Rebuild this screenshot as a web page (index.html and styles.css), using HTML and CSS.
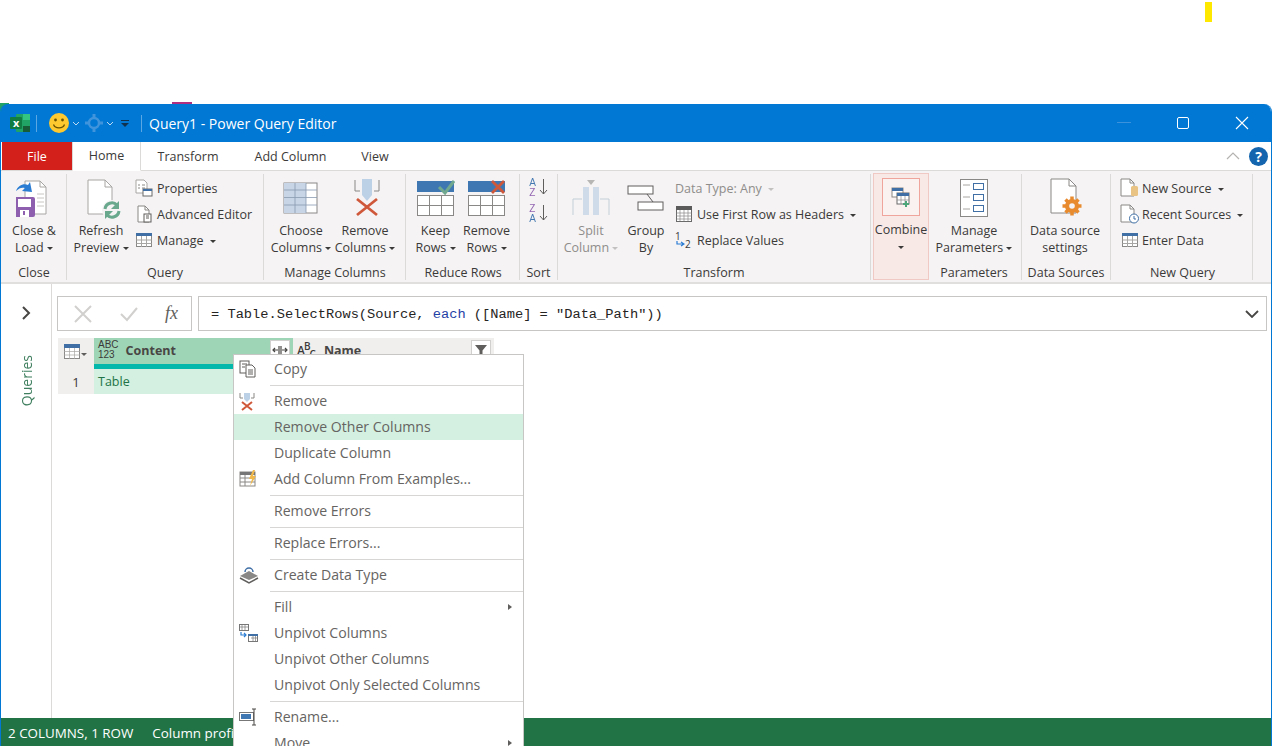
FILE: index.html
```html
<!DOCTYPE html>
<html lang="en">
<head>
    <meta charset="UTF-8">
    <title>Query1 - Power Query Editor</title>
    <link rel="stylesheet" href="styles.css">
</head>
<body>
    <div class="yellow-mark"></div>
    <div class="behind-pink"></div>
    <div class="behind-green"></div>
    <div class="window">
        <div class="titlebar">
            <svg class="excel-logo" width="22" height="20" viewBox="0 0 22 20"><rect x="7" y="1" width="14" height="18" rx="1" fill="#21a366"/><rect x="14" y="1" width="7" height="6" fill="#33c481"/><rect x="14" y="13" width="7" height="6" fill="#185c37"/><rect x="1" y="4" width="12" height="12" rx="1" fill="#107c41"/><text x="4" y="14" class="logo-x">x</text></svg>
            <span class="title-sep"></span>
            <svg class="smiley" width="22" height="22" viewBox="0 0 22 22"><circle cx="11" cy="11" r="10" fill="#fdc92f"/><circle cx="7.5" cy="8" r="1.4" fill="#6b5200"/><circle cx="14.5" cy="8" r="1.4" fill="#6b5200"/><path d="M5.5 12.5c1.5 4.5 9.500 4.500 11 0" fill="none" stroke="#6b5200" stroke-width="1.200"/></svg>
            <svg class="qat-arrow" width="8" height="5" viewBox="0 0 8 5"><path d="M1 1l3 3 3-3" fill="none" stroke="#bcd9f2"/></svg>
            <svg class="qat-gear" width="20" height="20" viewBox="0 0 20 20"><g fill="#3f94dc"><circle cx="10" cy="10" r="5" fill="none" stroke="#3f94dc" stroke-width="2.500"/><rect x="8.500" y="1" width="3" height="4"/><rect x="8.500" y="15" width="3" height="4"/><rect x="1" y="8.500" width="4" height="3"/><rect x="15" y="8.500" width="4" height="3"/></g></svg>
            <svg class="qat-arrow" width="8" height="5" viewBox="0 0 8 5"><path d="M1 1l3 3 3-3" fill="none" stroke="#bcd9f2"/></svg>
            <svg class="qat-more" width="8" height="7" viewBox="0 0 8 7"><rect y="0" width="8" height="1" fill="#10324f"/><path d="M0 3h8L4 7z" fill="#10324f"/></svg>
            <span class="title-sep"></span>
            <span class="title-text">Query1 - Power Query Editor</span>
            <div class="win-controls">
                <svg width="14" height="2" viewBox="0 0 14 2"><rect width="14" height="1" fill="#3c93db"/></svg>
                <svg width="12" height="12" viewBox="0 0 12 12"><rect x="0.500" y="0.500" width="11" height="11" rx="1.500" fill="none" stroke="#fff"/></svg>
                <svg width="14" height="14" viewBox="0 0 14 14"><path d="M1 1l12 12M13 1L1 13" stroke="#fff" stroke-width="1.100"/></svg>
            </div>
        </div>

        <div class="tabs">
            <div class="tab tab-file">File</div>
            <div class="tab tab-active">Home</div>
            <div class="tab tab-transform">Transform</div>
            <div class="tab tab-addcol">Add Column</div>
            <div class="tab tab-view">View</div>
            <svg class="collapse" width="14" height="8" viewBox="0 0 14 8"><path d="M1 7l6-6 6 6" fill="none" stroke="#b5b3b1" stroke-width="1.200"/></svg>
            <div class="help">?</div>
        </div>

        <div class="ribbon">
            <div class="group g-close">
                <div class="group-body">
                    <div class="big-btn w-close">
                        <svg class="big-icon" width="36" height="42" viewBox="3 0 36 42"><path d="M12 4h15l6 6v27H12z" fill="#fff" stroke="#a8a6a4"/><path d="M27 4v6h6" fill="none" stroke="#a8a6a4"/><path d="M24 17h7M24 21h7M24 25h7M24 29h7" stroke="#c8c6c4"/><path d="M3 14c2-6 8-8 12-6l2-3 2 10-10-1 3-3c-3-1-6 0-9 3z" fill="#2b7cd3"/><rect x="1" y="20" width="21" height="20" rx="2" fill="#8e5fae"/><rect x="5" y="22" width="13" height="8" fill="#fff"/><rect x="7" y="33" width="9" height="7" fill="#fff"/><rect x="10" y="34" width="2" height="4" fill="#8e5fae"/></svg>
                        <span class="big-label">Close &amp;<br>Load <i class="caret"></i></span>
                    </div>
                </div>
                <div class="group-label">Close</div>
            </div>

            <div class="group g-query">
                <div class="group-body">
                    <div class="big-btn w-refresh">
                        <svg class="big-icon" width="40" height="42" viewBox="0 0 40 42"><path d="M7 3h17l7 7v27H7z" fill="#fff" stroke="#a8a6a4"/><path d="M24 3v7h7" fill="none" stroke="#a8a6a4"/><circle cx="31" cy="33" r="10" fill="#f5f3f4"/><path d="M24 32a7 7 0 0 1 12-4" fill="none" stroke="#69a88c" stroke-width="3"/><path d="M38 24v8h-8z" fill="#69a88c"/><path d="M38 34a7 7 0 0 1-12 4" fill="none" stroke="#69a88c" stroke-width="3"/><path d="M24 42v-8h8z" fill="#69a88c"/></svg>
                        <span class="big-label">Refresh<br>Preview <i class="caret"></i></span>
                    </div>
                    <div class="small-col">
                        <div class="small-btn">
                            <svg width="18" height="18" viewBox="0 0 18 18"><path d="M1 1h8l3 3v10H1z" fill="#fff" stroke="#a8a6a4"/><path d="M3 6h2M7 6h3M3 9h2M7 9h3" stroke="#8a8886"/><rect x="8" y="10" width="9" height="7" fill="#fff" stroke="#6a6a6a"/><rect x="8" y="10" width="9" height="2" fill="#3f6fa5"/></svg>
                            <span>Properties</span>
                        </div>
                        <div class="small-btn">
                            <svg width="18" height="18" viewBox="0 0 18 18"><path d="M3 1h7l4 4v12H3z" fill="#fff" stroke="#8a8886"/><path d="M10 1v4h4" fill="none" stroke="#8a8886"/><rect x="9" y="9" width="7" height="8" fill="#fff" stroke="#605e5c"/><path d="M11 11h3M11 13h3" stroke="#605e5c"/></svg>
                            <span>Advanced Editor</span>
                        </div>
                        <div class="small-btn">
                            <svg width="18" height="16" viewBox="0 0 18 16"><rect x="1.500" y="1.500" width="15" height="13" fill="#fff" stroke="#8a8886"/><rect x="1" y="1" width="16" height="3" fill="#3f6fa5"/><path d="M1.500 8h15M1.500 11.500h15M6.500 4v11M11.500 4v11" stroke="#a8a6a4"/></svg>
                            <span>Manage <i class="caret caret-gap"></i></span>
                        </div>
                    </div>
                </div>
                <div class="group-label">Query</div>
            </div>

            <div class="group g-columns">
                <div class="group-body">
                    <div class="big-btn w-choose">
                        <svg class="big-icon" width="36" height="32" viewBox="0 0 36 32"><rect x="1" y="1" width="33" height="30" fill="#fff" stroke="#8a8886"/><rect x="1" y="1" width="22" height="30" fill="#c7d5e6"/><path d="M1 8h33M1 15.500h33M1 23h33M12 1v30M23 1v30" stroke="#8a9bb0" stroke-width="0.800"/></svg>
                        <span class="big-label">Choose<br>Columns <i class="caret"></i></span>
                    </div>
                    <div class="big-btn w-remove">
                        <svg class="big-icon" width="30" height="38" viewBox="-4 0 30 38"><path d="M1 1v11h5M25 1v11h-5" fill="none" stroke="#8a8886"/><path d="M8 0h10v16l-5 6-5-6z" fill="#bcd0e6"/><path d="M3 20l20 16M23 20L3 36" stroke="#d0583a" stroke-width="2.800"/></svg>
                        <span class="big-label">Remove<br>Columns <i class="caret"></i></span>
                    </div>
                </div>
                <div class="group-label">Manage Columns</div>
            </div>

            <div class="group g-rows">
                <div class="group-body">
                    <div class="big-btn w-rows">
                        <svg class="big-icon" width="38" height="36" viewBox="0 0 38 36"><rect x="0" y="1" width="37" height="11" fill="#3f77b2"/><rect x="0.500" y="15.500" width="36" height="20" fill="#fff" stroke="#8a8886"/><path d="M0 25.500h37M12.500 15v21M24.500 15v21" stroke="#8a8886"/><path d="M22 7l6 6L37 1" fill="none" stroke="#6fa88e" stroke-width="3"/></svg>
                        <span class="big-label">Keep<br>Rows <i class="caret"></i></span>
                    </div>
                    <div class="big-btn w-rows">
                        <svg class="big-icon" width="38" height="36" viewBox="0 0 38 36"><rect x="0" y="1" width="37" height="11" fill="#3f77b2"/><rect x="0.500" y="15.500" width="36" height="20" fill="#fff" stroke="#8a8886"/><path d="M0 25.500h37M12.500 15v21M24.500 15v21" stroke="#8a8886"/><path d="M24 1l12 12M36 1L24 13" stroke="#d0583a" stroke-width="2.800"/></svg>
                        <span class="big-label">Remove<br>Rows <i class="caret"></i></span>
                    </div>
                </div>
                <div class="group-label">Reduce Rows</div>
            </div>

            <div class="group g-sort">
                <div class="group-body sort-body">
                    <div class="sort-icon"><span class="sort-letters sort-up">A<br>Z</span><svg width="9" height="18" viewBox="0 0 9 18"><path d="M4.500 1v15M1 12l3.500 4L8 12" fill="none" stroke="#605e5c"/></svg></div>
                    <div class="sort-icon"><span class="sort-letters sort-down">Z<br>A</span><svg width="9" height="18" viewBox="0 0 9 18"><path d="M4.500 1v15M1 12l3.500 4L8 12" fill="none" stroke="#605e5c"/></svg></div>
                </div>
                <div class="group-label">Sort</div>
            </div>

            <div class="group g-transform">
                <div class="group-body">
                    <div class="big-btn w-split disabled">
                        <svg class="big-icon" width="38" height="38" viewBox="0 0 38 38"><path d="M1 36V20h9M37 36V20h-9" fill="none" stroke="#c3ced9"/><rect x="11" y="8" width="6" height="28" fill="#cfdbe8"/><rect x="21" y="8" width="6" height="28" fill="#cfdbe8"/><path d="M15 1h8l-4 5z" fill="#b8b6b4"/></svg>
                        <span class="big-label">Split<br>Column <i class="caret"></i></span>
                    </div>
                    <div class="big-btn w-group">
                        <svg class="big-icon" width="38" height="26" viewBox="0 0 38 26"><rect x="1" y="1" width="25" height="8" fill="#fff" stroke="#605e5c"/><rect x="11" y="17" width="25" height="8" fill="#fff" stroke="#605e5c"/><path d="M20 9l6 8" stroke="#605e5c"/></svg>
                        <span class="big-label">Group<br>By</span>
                    </div>
                    <div class="small-col">
                        <div class="small-btn disabled"><span>Data Type: Any <i class="caret caret-gap"></i></span></div>
                        <div class="small-btn">
                            <svg width="18" height="18" viewBox="0 0 18 18"><rect x="1.500" y="1.500" width="15" height="15" fill="#fff" stroke="#6a6a6a"/><rect x="1" y="1" width="16" height="4" fill="#5a5a5a"/><path d="M1.500 8h15M1.500 11h15M1.500 14h15M5 5v11M9 5v11M13 5v11" stroke="#8a8886" stroke-width="0.700"/></svg>
                            <span>Use First Row as Headers <i class="caret caret-gap"></i></span>
                        </div>
                        <div class="small-btn">
                            <span class="replace-icon"><span class="r1">1</span><svg width="9" height="7" viewBox="0 0 9 7"><path d="M1 0v3h6M5 1l3 2-3 2" fill="none" stroke="#2b7cd3" stroke-width="1.200"/></svg><span class="r2">2</span></span>
                            <span>Replace Values</span>
                        </div>
                    </div>
                </div>
                <div class="group-label">Transform</div>
            </div>

            <div class="group g-combine">
                <div class="group-body">
                    <div class="big-btn combine-btn">
                        <div class="combine-box">
                            <svg width="20" height="20" viewBox="0 0 20 20"><rect x="1" y="1" width="11" height="9" fill="#fff" stroke="#8a8886"/><rect x="1" y="1" width="11" height="3" fill="#3f6fa5"/><rect x="6" y="6" width="12" height="11" fill="#fff" stroke="#6a6a6a"/><rect x="6" y="6" width="12" height="3" fill="#3f6fa5"/><path d="M10 9v8M14 9v8M6 13h12" stroke="#8a8886" stroke-width="0.700"/><path d="M15 14v6M12 17h6" stroke="#4ca67a" stroke-width="2"/></svg>
                        </div>
                        <span class="big-label">Combine<br><i class="caret"></i></span>
                    </div>
                </div>
            </div>

            <div class="group g-params">
                <div class="group-body">
                    <div class="big-btn w-params">
                        <svg class="big-icon" width="28" height="38" viewBox="0 0 28 38"><rect x="0.500" y="0.500" width="27" height="37" fill="#fff" stroke="#8a8886"/><path d="M3 6h7M3 18h7M3 30h7" stroke="#a8a6a4"/><rect x="13.500" y="4.500" width="10" height="6" fill="#fff" stroke="#3f6fa5"/><rect x="13.500" y="15.500" width="10" height="6" fill="#fff" stroke="#3f6fa5"/><rect x="13.500" y="26.500" width="10" height="6" fill="#fff" stroke="#3f6fa5"/></svg>
                        <span class="big-label">Manage<br>Parameters <i class="caret"></i></span>
                    </div>
                </div>
                <div class="group-label">Parameters</div>
            </div>

            <div class="group g-sources">
                <div class="group-body">
                    <div class="big-btn w-sources">
                        <svg class="big-icon" width="36" height="40" viewBox="0 0 36 40"><path d="M4 1h18l7 7v27H4z" fill="#fff" stroke="#8a8886"/><path d="M22 1v7h7" fill="none" stroke="#8a8886"/><path d="M25 18.500v19M15.500 28h19M18.500 21.500l13 13M31.500 21.500l-13 13" stroke="#e88a2e" stroke-width="3.500"/><circle cx="25" cy="28" r="7" fill="#e88a2e"/><circle cx="25" cy="28" r="2.800" fill="#f5f3f4"/></svg>
                        <span class="big-label">Data source<br>settings</span>
                    </div>
                </div>
                <div class="group-label">Data Sources</div>
            </div>

            <div class="group g-newquery">
                <div class="group-body">
                    <div class="small-col">
                        <div class="small-btn">
                            <svg width="20" height="20" viewBox="0 0 20 20"><path d="M1 1h9l4 4v13H1z" fill="#fff" stroke="#8a8886"/><path d="M10 1v4h4" fill="none" stroke="#8a8886"/><rect x="11" y="8" width="7" height="10" rx="1.500" fill="#e8c384"/></svg>
                            <span>New Source <i class="caret caret-gap"></i></span>
                        </div>
                        <div class="small-btn">
                            <svg width="20" height="20" viewBox="0 0 20 20"><path d="M1 1h9l4 4v13H1z" fill="#fff" stroke="#8a8886"/><path d="M10 1v4h4" fill="none" stroke="#8a8886"/><circle cx="14" cy="14.500" r="4.500" fill="#fff" stroke="#3f6fa5"/><path d="M14 12v3h2" fill="none" stroke="#3f6fa5"/></svg>
                            <span>Recent Sources <i class="caret caret-gap"></i></span>
                        </div>
                        <div class="small-btn">
                            <svg width="20" height="16" viewBox="-1 0 20 16"><rect x="1.500" y="1.500" width="15" height="13" fill="#fff" stroke="#8a8886"/><rect x="1" y="1" width="16" height="3" fill="#3f6fa5"/><path d="M1.500 8h15M1.500 11.500h15M6.500 4v11M11.500 4v11" stroke="#a8a6a4"/></svg>
                            <span>Enter Data</span>
                        </div>
                    </div>
                </div>
                <div class="group-label">New Query</div>
            </div>
        </div>

        <div class="workspace">
            <div class="queries-pane">
                <svg class="pane-chevron" width="10" height="14" viewBox="0 0 10 14"><path d="M2 1l6 6-6 6" fill="none" stroke="#484644" stroke-width="2"/></svg>
                <span class="queries-label">Queries</span>
            </div>
            <div class="main">
                <div class="formula-row">
                    <div class="formula-btns">
                        <svg width="20" height="20" viewBox="0 0 20 20"><path d="M2 2l16 16M18 2L2 18" stroke="#d2d0ce" stroke-width="2"/></svg>
                        <svg width="18" height="16" viewBox="0 0 18 16"><path d="M1 8l6 6L17 2" fill="none" stroke="#d2d0ce" stroke-width="2"/></svg>
                        <span class="fx">fx</span>
                    </div>
                    <div class="formula-input">
                        <span>= Table.SelectRows(Source, <b class="kw">each</b> ([Name] = "Data_Path"))</span>
                        <svg width="14" height="8" viewBox="0 0 14 8"><path d="M1 1l6 6 6-6" fill="none" stroke="#484644" stroke-width="1.800"/></svg>
                    </div>
                </div>
                <div class="table">
                    <div class="thead">
                        <div class="corner">
                            <svg width="18" height="15" viewBox="0 0 18 15"><rect x="0.500" y="0.500" width="15" height="14" fill="#fff" stroke="#8a8886"/><rect x="0" y="0" width="16" height="4" fill="#3f6fa5"/><path d="M0 7.500h16M0 11h16M5.500 4v11M10.500 4v11" stroke="#a8a6a4" stroke-width="0.700"/></svg>
                            <i class="corner-caret"></i>
                        </div>
                        <div class="col col-content">
                            <span class="type-any">ABC<br>123</span>
                            <span class="col-name">Content</span>
                            <span class="col-btn"><svg width="16" height="12" viewBox="0 0 16 12"><path d="M7 2v8M9 2v8M1 6h5M15 6h-5M3 4L1 6l2 2M13 4l2 2-2 2" fill="none" stroke="#484644" stroke-width="1.200"/></svg></span>
                        </div>
                        <div class="col col-name-2">
                            <span class="type-text">A<sup>B</sup><sub>C</sub></span>
                            <span class="col-name">Name</span>
                            <span class="col-btn filter-btn"><svg width="12" height="12" viewBox="0 0 12 12"><path d="M0 1h12L7.500 6.500V12l-3-2V6.500z" fill="#605e5c"/></svg></span>
                        </div>
                    </div>
                    <div class="quality-row"><span class="quality-bar"></span></div>
                    <div class="tbody">
                        <div class="rownum">1</div>
                        <div class="cell-selected">Table</div>
                    </div>
                </div>
            </div>
        </div>

        <div class="statusbar">
            <span>2 COLUMNS, 1 ROW</span>
            <span>Column profi</span>
        </div>
    </div>

    <div class="context-menu">
        <div class="menu-item"><svg width="18" height="18" viewBox="0 0 18 18"><rect x="1" y="1" width="9" height="12" fill="#fff" stroke="#605e5c"/><path d="M3 4h5M3 7h3" stroke="#605e5c"/><path d="M7 5h6l3 3v9H7z" fill="#fff" stroke="#605e5c"/><path d="M9 10h5M9 12h5M9 14h5" stroke="#605e5c"/></svg><span>Copy</span></div>
        <div class="menu-sep"></div>
        <div class="menu-item"><svg width="16" height="20" viewBox="0 0 16 20"><path d="M1 1v5h3M15 1v5h-3" fill="none" stroke="#8a8886"/><path d="M5 1h6v6l-3 3-3-3z" fill="#bcd0e6"/><path d="M3 10l10 8M13 10L3 18" stroke="#d0583a" stroke-width="2"/></svg><span>Remove</span></div>
        <div class="menu-item menu-hover"><span>Remove Other Columns</span></div>
        <div class="menu-item"><span>Duplicate Column</span></div>
        <div class="menu-item"><svg width="18" height="18" viewBox="0 0 18 18"><rect x="1" y="2" width="15" height="14" fill="#fff" stroke="#8a8886"/><rect x="1" y="2" width="15" height="3" fill="#777"/><path d="M1 8h15M1 12h15M6 5v11" stroke="#8a8886"/><path d="M14 0l-4 9h3l-2 7 6-10h-3l2-6z" fill="#f0b74a"/></svg><span>Add Column From Examples...</span></div>
        <div class="menu-sep"></div>
        <div class="menu-item"><span>Remove Errors</span></div>
        <div class="menu-sep"></div>
        <div class="menu-item"><span>Replace Errors...</span></div>
        <div class="menu-sep"></div>
        <div class="menu-item"><svg width="20" height="18" viewBox="0 0 20 18"><path d="M10 5l9 5-9 4-9-4z" fill="#8a8886"/><path d="M1 12l9 5 9-5" fill="none" stroke="#605e5c" stroke-width="1.500"/><path d="M6 6a4 4 0 0 1 8 0" fill="none" stroke="#3f6fa5" stroke-width="1.500"/></svg><span>Create Data Type</span></div>
        <div class="menu-sep"></div>
        <div class="menu-item"><span>Fill</span><i class="menu-arrow"></i></div>
        <div class="menu-item"><svg width="19" height="18" viewBox="0 0 19 18"><rect x="0.500" y="0.500" width="9" height="6" fill="#fff" stroke="#777"/><path d="M0 3h10M3 0v7M6 0v7" stroke="#777" stroke-width="0.700"/><rect x="9.500" y="10.500" width="9" height="7" fill="#fff" stroke="#777"/><rect x="9" y="10" width="10" height="2" fill="#3f6fa5"/><path d="M12 14h7M14 12v6M16.500 12v6" stroke="#777" stroke-width="0.700"/><path d="M2 8v3h5M5 9l2 2-2 2" fill="none" stroke="#2b7cd3" stroke-width="1.200"/></svg><span>Unpivot Columns</span></div>
        <div class="menu-item"><span>Unpivot Other Columns</span></div>
        <div class="menu-item"><span>Unpivot Only Selected Columns</span></div>
        <div class="menu-sep"></div>
        <div class="menu-item"><svg width="20" height="18" viewBox="0 0 20 18"><rect x="0.500" y="4.500" width="14" height="8" fill="#fff" stroke="#777"/><rect x="2" y="6" width="10" height="5" fill="#3f77b2"/><path d="M13 1h4M13 17h4M15 1v16" fill="none" stroke="#484644"/></svg><span>Rename...</span></div>
        <div class="menu-item"><span>Move</span><i class="menu-arrow"></i></div>
    </div>
</body>
</html>
```

FILE: styles.css
```css
:root {
    --blue: #0078d4;
    --green: #217346;
    --ribbon-bg: #f5f3f4;
    --line: #dcdad8;
    --text: #3b3a39;
    --menu-text: #666462;
    --select: #d3f0e0;
}
* {
    box-sizing: border-box;
}
html, body {
    height: 100%;
}
body {
    margin: 0;
    padding-top: 104px;
    background: #fff;
    color: var(--text);
    font-family: "Open Sans", "Noto Sans", sans-serif;
    font-size: 12.5px;
    overflow: hidden;
}
i {
    font-style: normal;
}
.yellow-mark {
    position: absolute;
    left: 1205px;
    top: 2px;
    width: 7px;
    height: 20px;
    background: #ffe800;
}
.behind-pink {
    position: absolute;
    left: 172px;
    top: 102px;
    width: 20px;
    height: 3px;
    background: #b0307f;
}
.behind-green {
    position: absolute;
    left: 0;
    top: 103px;
    width: 9px;
    height: 9px;
    background: #21a366;
}
.window {
    position: relative;
    height: 642px;
    display: flex;
    flex-direction: column;
    border-radius: 8px 8px 0 0;
    border-left: 1px solid var(--blue);
    border-right: 1px solid var(--blue);
    overflow: hidden;
}

/* title bar */
.titlebar {
    height: 38px;
    flex: none;
    background: var(--blue);
    display: flex;
    align-items: center;
    padding-left: 8px;
    color: #fff;
}
.logo-x {
    font-size: 11px;
    font-weight: 700;
    fill: #fff;
}
.title-sep {
    width: 1px;
    height: 17px;
    background: #5aa7e3;
    margin: 0 6px 0 5px;
}
.smiley {
    margin-left: 5px;
}
.qat-arrow {
    margin: 0 3px 0 2px;
}
.qat-gear {
    margin-left: 1px;
}
.qat-more {
    margin: 0 7px 0 4px;
}
.title-text {
    font-size: 14px;
    margin-left: 1px;
}
.win-controls {
    margin-left: auto;
    display: flex;
    align-items: center;
    gap: 46px;
    padding-right: 22px;
}

/* tabs */
.tabs {
    height: 29px;
    flex: none;
    display: flex;
    align-items: center;
    background: #fff;
    border-bottom: 1px solid var(--line);
    padding-left: 1px;
}
.tab {
    height: 29px;
    display: flex;
    align-items: center;
    justify-content: center;
}
.tab-file {
    width: 70px;
    height: 28px;
    align-self: flex-start;
    background: #d3201a;
    color: #fff;
}
.tab-active {
    width: 69px;
    background: #fff;
    border-left: 1px solid var(--line);
    border-right: 1px solid var(--line);
    border-bottom: 1px solid #fff;
}
.tab-transform {
    width: 94px;
}
.tab-addcol {
    width: 111px;
}
.tab-view {
    width: 58px;
}
.collapse {
    margin-left: auto;
}
.help {
    width: 19px;
    height: 19px;
    margin: 0 3px 0 9px;
    border-radius: 50%;
    background: #1465ae;
    color: #fff;
    font-weight: 700;
    font-size: 14px;
    display: flex;
    align-items: center;
    justify-content: center;
}

/* ribbon */
.ribbon {
    height: 113px;
    flex: none;
    display: flex;
    background: var(--ribbon-bg);
    border-bottom: 2px solid #e1dfdd;
    padding: 3px 0 0 1px;
}
.group {
    display: flex;
    flex-direction: column;
    border-right: 1px solid var(--line);
    margin-bottom: 2px;
}
.g-close { width: 65px; }
.g-query { width: 197px; padding-left: 3px; }
.g-columns { width: 142px; padding-left: 4px; }
.g-rows { width: 114px; padding-left: 4px; }
.g-sort { width: 38px; }
.g-transform { width: 313px; padding-left: 3px; }
.g-combine { width: 62px; padding-left: 2px; border-right: none; }
.g-params { width: 89px; padding-left: 1px; }
.g-sources { width: 89px; padding-left: 3px; }
.g-newquery { width: 142px; padding-left: 5px; }
.group-body {
    flex: 1;
    display: flex;
    min-height: 0;
}
.group-label {
    height: 18px;
    line-height: 22px;
    text-align: center;
    white-space: nowrap;
}
.g-query .group-label, .g-columns .group-label, .g-rows .group-label,
.g-transform .group-label, .g-sources .group-label, .g-newquery .group-label {
    margin-left: -3px;
}
.g-params .group-label {
    margin: 0 4px 0 -3px;
}
.big-btn {
    display: flex;
    flex-direction: column;
    align-items: center;
    white-space: nowrap;
    text-align: center;
}
.big-icon {
    height: 46px;
    padding-top: 2px;
    flex: none;
    margin-bottom: 2px;
}
.big-label {
    line-height: 17px;
}
.caret {
    display: inline-block;
    width: 0;
    height: 0;
    border-left: 3px solid transparent;
    border-right: 3px solid transparent;
    border-top: 3px solid #3b3a39;
    vertical-align: 2px;
}
.caret-gap {
    margin-left: 3px;
}
.disabled {
    color: #8f8d8b;
}
.disabled .caret {
    border-top-color: #c3c1bf;
}
.w-close { width: 64px; }
.w-refresh { width: 62px; }
.w-choose { width: 66px; }
.w-remove { width: 62px; }
.w-rows { width: 51px; }
.w-split { width: 60px; }
.w-group { width: 50px; }
.w-params { width: 80px; }
.w-sources { width: 80px; }
.small-col {
    display: flex;
    flex-direction: column;
    padding: 1px 0 0 3px;
}
.g-transform .small-col, .g-newquery .small-col {
    padding-left: 4px;
}
.small-btn {
    height: 26px;
    display: flex;
    align-items: center;
    gap: 4px;
    white-space: nowrap;
}
.g-newquery .small-btn {
    gap: 2px;
}
.small-btn svg {
    flex: none;
}
.replace-icon {
    width: 18px;
    height: 18px;
    position: relative;
    display: block;
    flex: none;
}
.replace-icon svg {
    position: absolute;
    left: 1px;
    top: 10px;
}
.r1, .r2 {
    position: absolute;
    font-size: 10px;
    line-height: 10px;
}
.r1 { left: 0; top: 0; }
.r2 { left: 10px; top: 8px; }

/* sort letters: one text, two colours */
.sort-body {
    flex-direction: column;
    align-items: center;
    gap: 8px;
    padding-top: 4px;
}
.sort-icon {
    height: 18px;
    display: flex;
    gap: 3px;
    align-items: flex-start;
}
.sort-letters {
    display: block;
    font-family: "Liberation Sans", sans-serif;
    font-size: 10px;
    line-height: 10px;
    color: transparent;
    -webkit-background-clip: text;
    background-clip: text;
}
.sort-up {
    background-image: linear-gradient(#4478b0 50%, #8e5fae 50%);
}
.sort-down {
    background-image: linear-gradient(#8e5fae 50%, #4478b0 50%);
}

.combine-btn {
    width: 56px;
    height: 107px;
    margin-top: -1px;
    background: #f8e9e7;
    border: 1px solid #f1c9c4;
}
.combine-box {
    width: 38px;
    height: 38px;
    margin: 4px 0 5px;
    background: #faf2f1;
    border: 1px solid #f0a59c;
    display: flex;
    align-items: center;
    justify-content: center;
}

/* workspace */
.workspace {
    flex: 1;
    min-height: 0;
    display: flex;
}
.queries-pane {
    width: 51px;
    flex: none;
    border-right: 1px solid var(--line);
    display: flex;
    flex-direction: column;
    align-items: center;
    padding-top: 22px;
}
.queries-label {
    margin-top: 35px;
    writing-mode: vertical-rl;
    transform: rotate(180deg);
    color: #3f7f5f;
    font-size: 14px;
}
.main {
    flex: 1;
    padding: 12px 4px 0 6px;
}
.formula-row {
    height: 35px;
    margin-left: -1px;
    display: flex;
    gap: 6px;
}
.formula-btns {
    width: 135px;
    flex: none;
    border: 1px solid #c8c6c4;
    display: flex;
    align-items: center;
    padding-left: 15px;
    gap: 27px;
}
.fx {
    font-family: "Liberation Serif", serif;
    font-style: italic;
    font-size: 18px;
    color: #605e5c;
}
.formula-input {
    flex: 1;
    border: 1px solid #c8c6c4;
    display: flex;
    align-items: center;
    justify-content: space-between;
    padding: 1px 7px 0 12px;
    font-family: "Liberation Mono", monospace;
    font-size: 13.7px;
    color: #252423;
}
.kw {
    color: #1f3fa6;
    font-weight: 400;
}
.table {
    width: 436px;
    margin-top: 7px;
}
.thead {
    height: 26px;
    display: flex;
    background: #f0efee;
}
.corner {
    width: 36px;
    display: flex;
    align-items: center;
    padding-left: 6px;
}
.corner-caret {
    border-left: 3px solid transparent;
    border-right: 3px solid transparent;
    border-top: 3px solid #605e5c;
    margin: 6px 0 0 -1px;
}
.col {
    display: flex;
    align-items: center;
    padding: 0 0 2px 4px;
    gap: 7px;
}
.col-content {
    width: 199px;
    background: #9fd5b7;
}
.col-name-2 {
    flex: 1;
    gap: 9px;
}
.type-any {
    font-family: "Liberation Sans", sans-serif;
    font-size: 10px;
    line-height: 10px;
}
.type-text {
    font-size: 12px;
    font-weight: 600;
    letter-spacing: -1px;
}
.type-text sup, .type-text sub {
    font-size: 10px;
    line-height: 0;
}
.col-name {
    font-weight: 700;
    font-size: 12.5px;
    color: #484644;
}
.col-btn {
    margin-left: auto;
    margin-right: 3px;
    width: 20px;
    height: 20px;
    background: #fff;
    border: 1px solid #d2d0ce;
    display: flex;
    align-items: center;
    justify-content: center;
}
.quality-row {
    height: 5px;
    background: #f0efee;
    padding-left: 36px;
}
.quality-bar {
    display: block;
    width: 199px;
    height: 5px;
    background: #01b8aa;
}
.tbody {
    height: 25px;
    display: flex;
}
.rownum {
    width: 36px;
    background: #f0efee;
    display: flex;
    align-items: center;
    justify-content: center;
    font-size: 13px;
}
.cell-selected {
    flex: 1;
    background: var(--select);
    color: #217346;
    padding-left: 4px;
    display: flex;
    align-items: center;
}

/* status */
.statusbar {
    height: 28px;
    flex: none;
    background: var(--green);
    color: #fff;
    display: flex;
    align-items: center;
    gap: 19px;
    padding: 1px 0 0 7px;
    white-space: nowrap;
    font-size: 13.4px;
}

/* context menu */
.context-menu {
    position: absolute;
    left: 233px;
    top: 354px;
    width: 291px;
    padding: 1px 0 0;
    background: #fff;
    border: 1px solid #c8c6c4;
    color: var(--menu-text);
    font-size: 14.1px;
    height: 402px;
}
.menu-item {
    height: 26px;
    display: flex;
    align-items: center;
    padding: 0 0 2px 40px;
    position: relative;
}
.menu-item svg {
    position: absolute;
    left: 5px;
    top: 4px;
}
.menu-hover {
    background: var(--select);
}
.menu-sep {
    height: 1px;
    margin: 3px 0 2px 36px;
    background: #d8d6d4;
}
.menu-arrow {
    position: absolute;
    right: 11px;
    top: 10px;
    border-top: 3px solid transparent;
    border-bottom: 3px solid transparent;
    border-left: 4px solid #605e5c;
}
```
